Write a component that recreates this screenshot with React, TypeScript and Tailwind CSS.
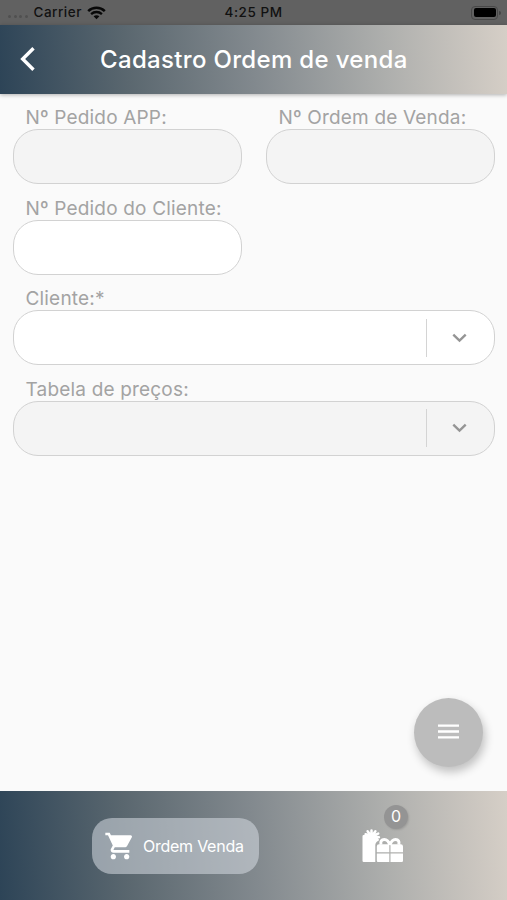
import React from 'react';
import { MdShoppingCart } from 'react-icons/md';

const gradient = 'bg-[linear-gradient(86deg,#2d4457_0%,#5a676f_25%,#82898e_50%,#aeafad_76%,#d6cfc7_100%)]';

type FieldProps = {
  label: string;
  disabled?: boolean;
  select?: boolean;
};

const Field = ({ label, disabled, select }: FieldProps) => (
  <div className="min-w-0 flex-1">
    <label className="block h-6 pt-px pl-[12.5px] text-[19px] leading-6 tracking-[0.18px] whitespace-nowrap text-[#a3a3a3]">
      {label}
    </label>
    <div
      className={`flex h-[55px] items-center justify-end rounded-[25px] border border-[#d2d2d2] ${
        disabled ? 'bg-[#f4f4f4]' : 'bg-white'
      }`}
    >
      {select && (
        <>
          <span className="h-[38px] w-px bg-[#d4d4d4]" />
          <span className="flex w-[67px] justify-center pr-[2px]">
            <svg width="15" height="10" viewBox="0 0 15 10" fill="none" stroke="#959595" strokeWidth="2.4">
              <path d="M1.3 1.6 7.5 7.6 13.7 1.6" />
            </svg>
          </span>
        </>
      )}
    </div>
  </div>
);

const StatusBar = () => (
  <div className="grid h-[25px] grid-cols-3 items-center bg-[#616161] text-[13.5px] font-medium text-[#111]">
    <div className="flex items-center pl-2">
      <div className="mt-2 flex gap-[2.5px]">
        {[0, 1, 2, 3].map((dot) => (
          <span key={dot} className="size-[3px] rounded-full bg-[#505050]" />
        ))}
      </div>
      <span className="ml-[6px] tracking-[0.5px]">Carrier</span>
      <svg className="ml-[5px]" width="19" height="14" viewBox="0 0 19 14" fill="none" stroke="#080808">
        <path d="M1.2 5.1C5.8.6 13.2.6 17.8 5.1" strokeWidth="2.5" />
        <path d="M4.1 8.1C7.1 5.3 11.9 5.3 14.9 8.1" strokeWidth="2.3" />
        <path d="M6.6 10.3C8.3 8.9 10.7 8.9 12.4 10.3L9.5 13.2Z" fill="#080808" stroke="none" />
      </svg>
    </div>
    <span className="text-center tracking-[0.55px]">4:25 PM</span>
    <div className="flex items-center justify-end gap-px pr-[6px]">
      <span className="h-[14px] w-[27px] rounded-[4px] border border-[#484848] p-[1.5px]">
        <span className="block size-full rounded-[2px] bg-black" />
      </span>
      <span className="h-1 w-[2px] rounded-r-full bg-[#444]" />
    </div>
  </div>
);

const GiftsIcon = () => (
  <svg width="41" height="34" viewBox="0 0 41 34" fill="currentColor">
    <path d="M1.7 6H13L16.8 10.4 14.2 13.4Q13.3 14.6 13.3 16V33H1.7Q.5 33 .5 31.8V7.2Q.5 6 1.7 6Z" />
    <path
      d="M9.5 7.5V1.4M9.5 7.5 5.6 2.2M9.5 7.5 13.4 2.2M9.5 7.5 3.6 5.2M9.5 7.5 16.2 4.6M9.5 7.5 17 8.2M9.5 7.5 15.6 11"
      fill="none"
      stroke="currentColor"
      strokeWidth="2.5"
      strokeLinecap="round"
    />
    <path d="M14.8 23.2V17.4Q14.8 15.2 17 15.2H27.3V23.2ZM28.5 23.2V15.2H38.8Q41 15.2 41 17.4V23.2ZM14.8 24.4H27.3V33H16Q14.8 33 14.8 31.8ZM28.5 24.4H41V31.8Q41 33 39.8 33H28.5Z" />
    <path
      d="M27.8 16C26.6 12 24.9 10.5 22.3 10.5 19.5 10.5 18.2 12.6 19 15.6M28 16C29.2 12 30.9 10.5 33.5 10.5 36.3 10.5 37.6 12.6 36.8 15.6"
      fill="none"
      stroke="currentColor"
      strokeWidth="3"
    />
  </svg>
);

const App = () => {
  return (
    <div className="flex h-[900px] w-[507px] flex-col overflow-hidden bg-[#fafafa] font-['Inter','Liberation_Sans',sans-serif]">
      <StatusBar />
      <header className={`z-10 flex h-[69px] shrink-0 items-center shadow-[0_1px_4px_rgba(0,0,0,0.3)] ${gradient}`}>
        <button className="w-[100px] pb-px pl-[19px] text-white" aria-label="Voltar">
          <svg width="18" height="26" viewBox="0 0 18 26" fill="none" stroke="currentColor" strokeWidth="3.4">
            <path d="M14.5 2.3 3.7 13 14.5 23.7" />
          </svg>
        </button>
        <h1 className="text-2xl font-medium tracking-[0.33px] whitespace-nowrap text-white">Cadastro Ordem de venda</h1>
      </header>

      <main className="flex flex-1 flex-col pt-[11px] pr-3 pl-[13px]">
        <form className="flex flex-col gap-[11.5px]">
          <div className="flex gap-6">
            <Field label="Nº Pedido APP:" disabled />
            <Field label="Nº Ordem de Venda:" disabled />
          </div>
          <div className="flex gap-6">
            <Field label="Nº Pedido do Cliente:" />
            <div className="flex-1" />
          </div>
          <Field label="Cliente:*" select />
          <Field label="Tabela de preços:" disabled select />
        </form>
        <button
          className="mt-auto mr-3 mb-6 flex size-[69px] items-center justify-center self-end rounded-full bg-[#bcbcbc] pb-[2px] text-white shadow-[2px_5px_10px_rgba(0,0,0,0.24)]"
          aria-label="Menu"
        >
          <svg width="21" height="15" viewBox="0 0 21 15" stroke="currentColor" strokeWidth="2.3">
            <path d="M0 1.7H21M0 7.5H21M0 13.3H21" />
          </svg>
        </button>
      </main>

      <nav className={`flex h-[109px] shrink-0 items-center pl-[92px] ${gradient}`}>
        <button className="flex h-14 w-[167px] items-center rounded-[20px] bg-[#d5dae2]/55 pl-3 text-white">
          <MdShoppingCart size={32} />
          <span className="ml-[7px] text-base tracking-[-0.25px] whitespace-nowrap">Ordem Venda</span>
        </button>
        <div className="relative ml-[103px] text-white">
          <GiftsIcon />
          <span className="absolute -top-[24px] left-[22px] flex size-6 items-center justify-center rounded-full bg-[#949494] pb-[2px] text-base shadow-[1px_1px_2px_rgba(0,0,0,0.12)]">
            0
          </span>
        </div>
      </nav>
    </div>
  );
};

export default App;
